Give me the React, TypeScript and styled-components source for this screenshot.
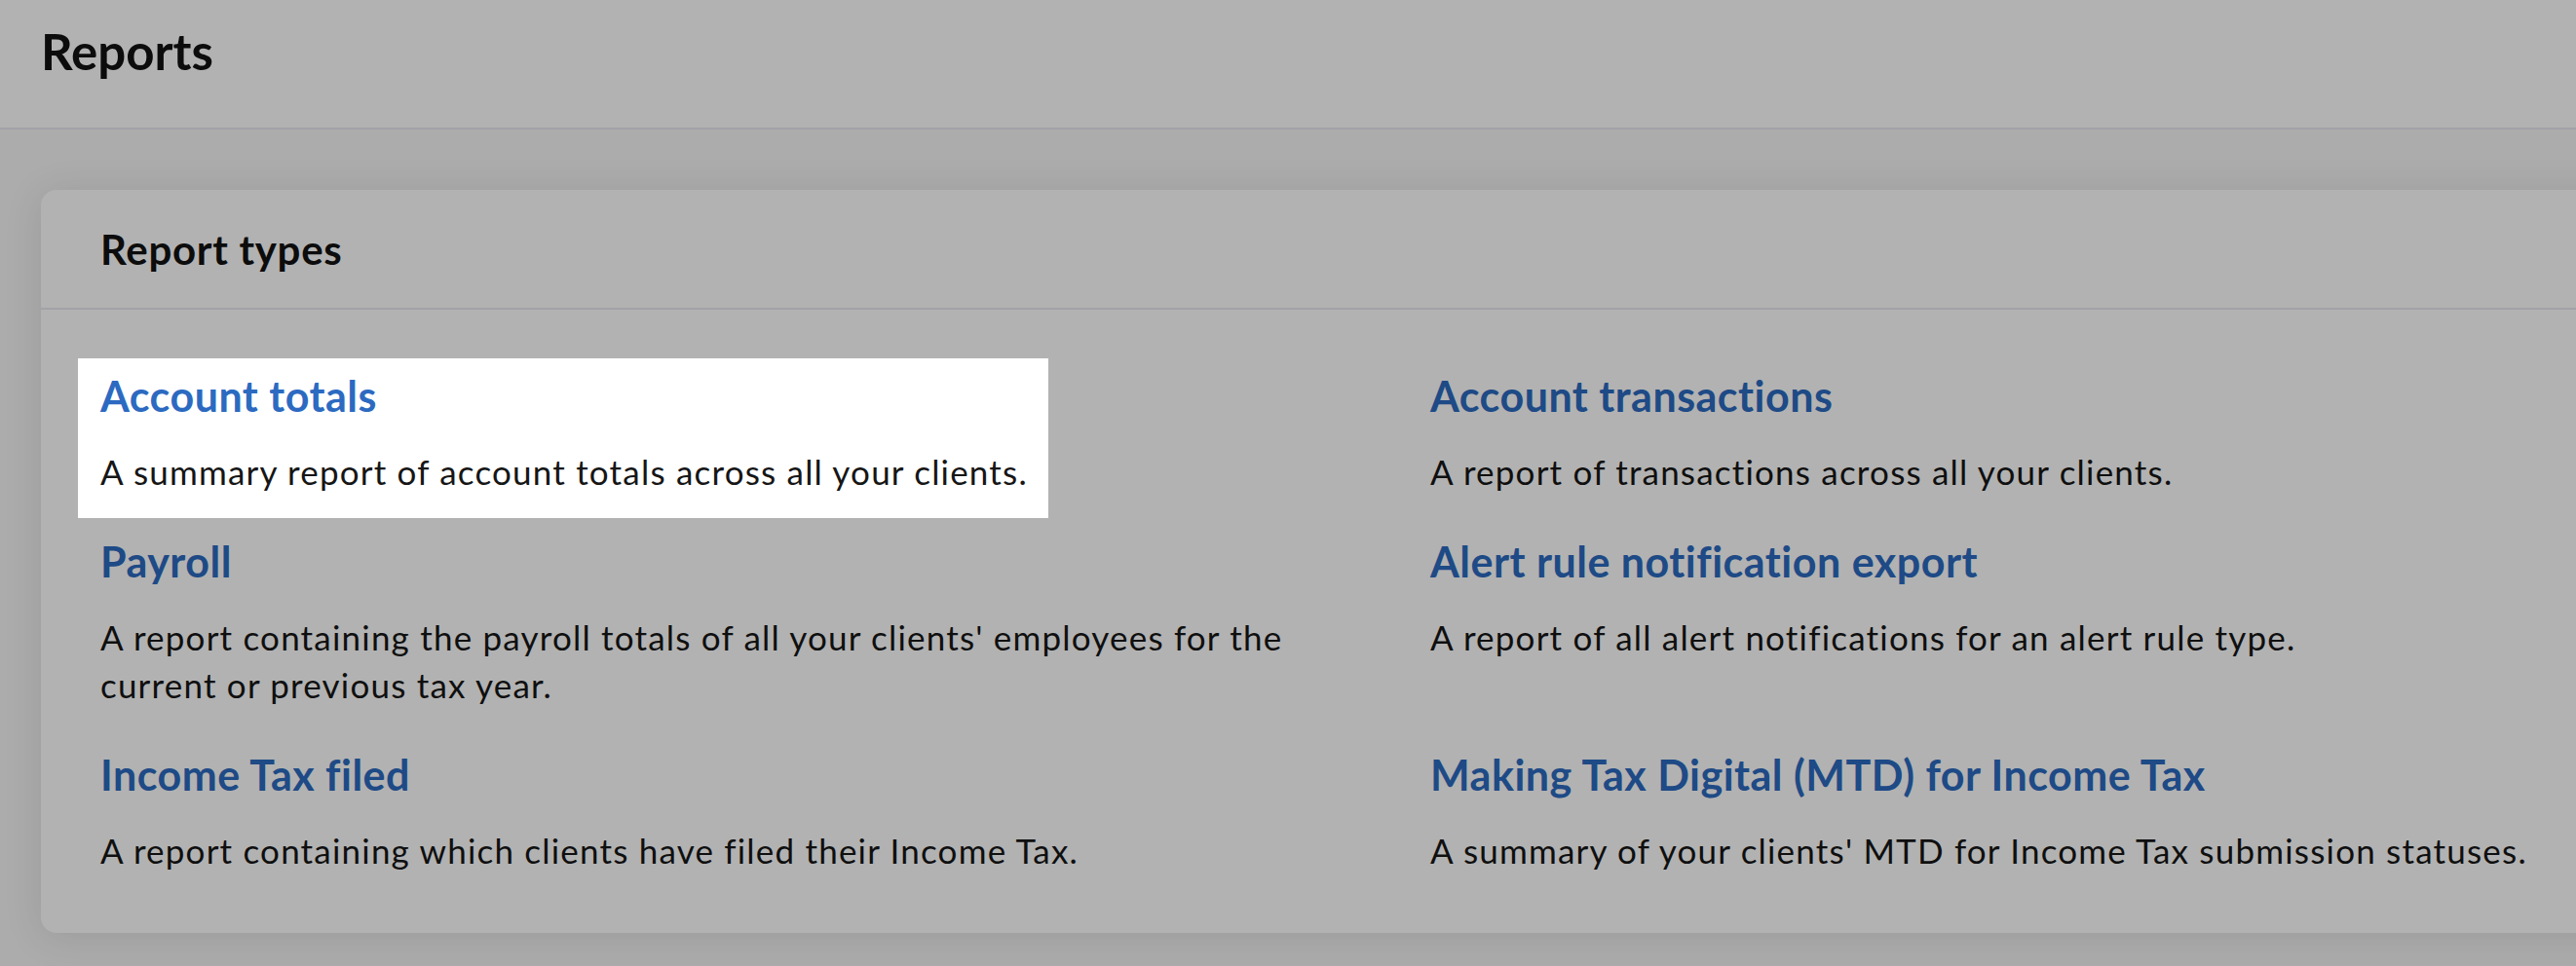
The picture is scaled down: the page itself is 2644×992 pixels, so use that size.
import React from "react";
import styled, { createGlobalStyle, css } from "styled-components";

const GlobalStyle = createGlobalStyle`
  html, body {
    margin: 0;
    padding: 0;
  }
  body {
    background: #f6f6f7;
    font-family: Lato, "Noto Sans", sans-serif;
    color: #161616;
    overflow: hidden;
  }
`;

const Page = styled.div`
  min-height: 100vh;
  overflow: hidden;
  background: #f6f6f7;
`;

const TopBar = styled.header`
  background: #ffffff;
  border-bottom: 2px solid #e9e9ef;
  padding: 22px 42px 48px;
`;

const PageTitle = styled.h1`
  margin: 0;
  font-size: 51px;
  line-height: 61px;
  font-weight: 700;
  color: #121212;
`;

const Content = styled.main`
  padding: 62px 0 0 42px;
`;

const Card = styled.section`
  width: max-content;
  background: #ffffff;
  border-radius: 16px;
  box-shadow: 0 4px 40px rgba(0, 0, 0, 0.1);
`;

const CardHeader = styled.div`
  height: 121px;
  display: flex;
  align-items: center;
  padding: 0 61px;
  border-bottom: 2px solid #e9e9ef;
`;

const CardTitle = styled.h2`
  margin: 0;
  font-size: 42px;
  line-height: 50px;
  font-weight: 700;
  letter-spacing: 0.7px;
  color: #121212;
`;

const ReportGrid = styled.div`
  display: grid;
  grid-template-columns: 1270px 1270px;
  column-gap: 95px;
  row-gap: 40px;
  padding: 61px 61px 60px;
  align-items: start;
  justify-items: start;
`;

const ReportItem = styled.div<{ $spotlight?: boolean }>`
  ${(p) =>
    p.$spotlight &&
    css`
      position: relative;
      z-index: 5;
      background: #ffffff;
      padding: 11px 21px 23px 23px;
      margin: -11px -21px -23px -23px;
      box-shadow: 0 0 0 4000px rgba(0, 0, 0, 0.3);
    `}
`;

const ReportLink = styled.a`
  display: block;
  margin-bottom: 25px;
  font-size: 43px;
  line-height: 56px;
  font-weight: 700;
  letter-spacing: 0.5px;
  color: #2c6ac1;
  text-decoration: none;
`;

const ReportDesc = styled.p`
  margin: 0;
  font-size: 35px;
  line-height: 49px;
  letter-spacing: 1.2px;
  color: #161616;
`;

const reports = [
  {
    title: "Account totals",
    desc: "A summary report of account totals across all your clients.",
    spotlight: true,
  },
  {
    title: "Account transactions",
    desc: "A report of transactions across all your clients.",
  },
  {
    title: "Payroll",
    desc: "A report containing the payroll totals of all your clients' employees for the current or previous tax year.",
  },
  {
    title: "Alert rule notification export",
    desc: "A report of all alert notifications for an alert rule type.",
  },
  {
    title: "Income Tax filed",
    desc: "A report containing which clients have filed their Income Tax.",
  },
  {
    title: "Making Tax Digital (MTD) for Income Tax",
    desc: "A summary of your clients' MTD for Income Tax submission statuses.",
  },
];

function App() {
  return (
    <>
      <GlobalStyle />
      <Page>
        <TopBar>
          <PageTitle>Reports</PageTitle>
        </TopBar>
        <Content>
          <Card>
            <CardHeader>
              <CardTitle>Report types</CardTitle>
            </CardHeader>
            <ReportGrid>
              {reports.map((r) => (
                <ReportItem key={r.title} $spotlight={r.spotlight}>
                  <ReportLink href="#">{r.title}</ReportLink>
                  <ReportDesc>{r.desc}</ReportDesc>
                </ReportItem>
              ))}
            </ReportGrid>
          </Card>
        </Content>
      </Page>
    </>
  );
}

export default App;
